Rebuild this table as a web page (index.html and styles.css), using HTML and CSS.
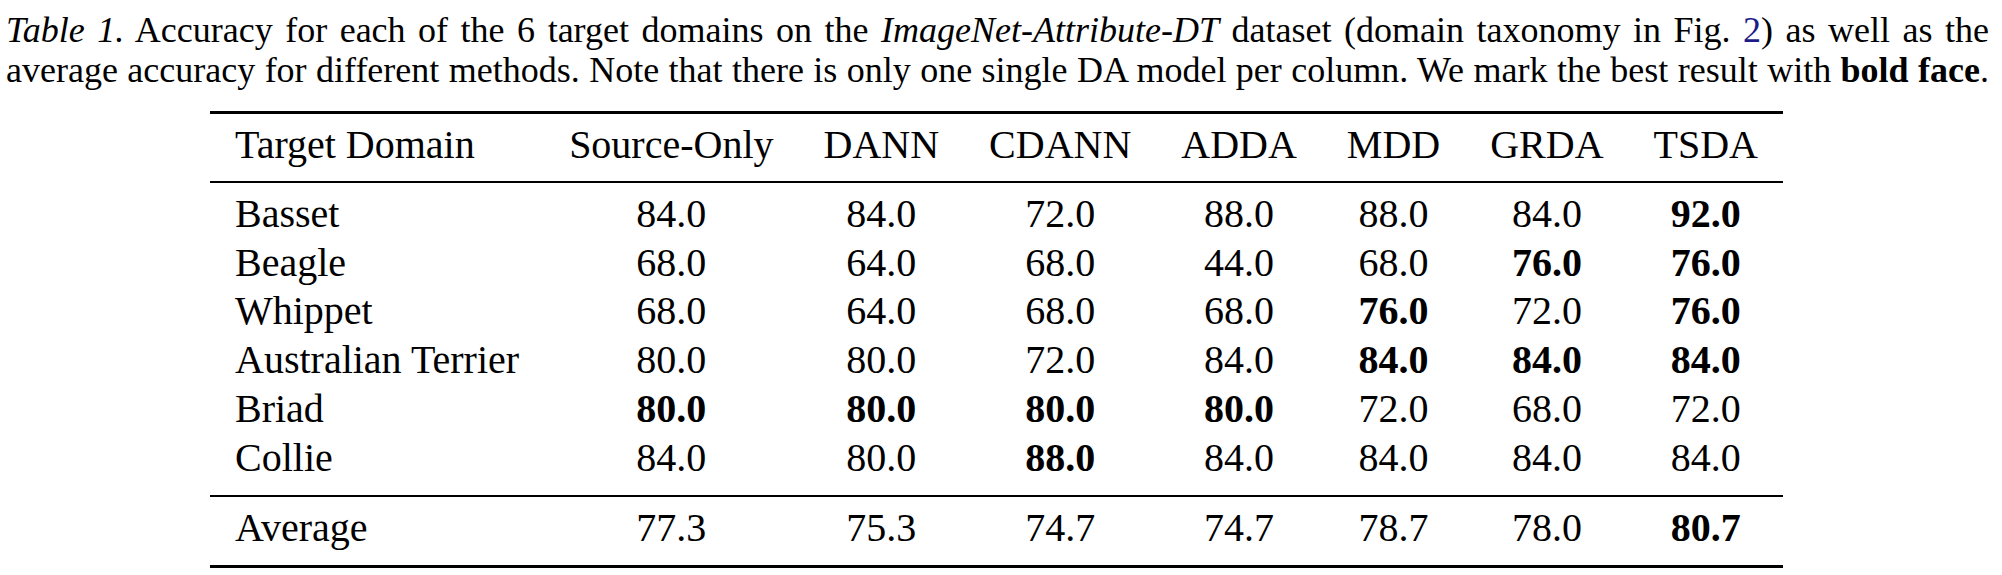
FILE: index.html
```html
<!DOCTYPE html>
<html>
<head>
<meta charset="utf-8">
<link rel="stylesheet" href="styles.css">
</head>
<body>
<div class="page">
  <p class="caption"><i>Table 1.</i> Accuracy for each of the 6 target domains on the <i>ImageNet-Attribute-DT</i> dataset (domain taxonomy in Fig. <span class="ref">2</span>) as well as the<br>average accuracy for different methods. Note that there is only one single DA model per column. We mark the best result with <b>bold face</b>.</p>
  <table class="results">
    <thead>
      <tr><th class="name">Target Domain</th><th>Source-Only</th><th>DANN</th><th>CDANN</th><th>ADDA</th><th>MDD</th><th>GRDA</th><th>TSDA</th></tr>
    </thead>
    <tbody class="main">
      <tr><td class="name">Basset</td><td>84.0</td><td>84.0</td><td>72.0</td><td>88.0</td><td>88.0</td><td>84.0</td><td class="best">92.0</td></tr>
      <tr><td class="name">Beagle</td><td>68.0</td><td>64.0</td><td>68.0</td><td>44.0</td><td>68.0</td><td class="best">76.0</td><td class="best">76.0</td></tr>
      <tr><td class="name">Whippet</td><td>68.0</td><td>64.0</td><td>68.0</td><td>68.0</td><td class="best">76.0</td><td>72.0</td><td class="best">76.0</td></tr>
      <tr><td class="name">Australian Terrier</td><td>80.0</td><td>80.0</td><td>72.0</td><td>84.0</td><td class="best">84.0</td><td class="best">84.0</td><td class="best">84.0</td></tr>
      <tr><td class="name">Briad</td><td class="best">80.0</td><td class="best">80.0</td><td class="best">80.0</td><td class="best">80.0</td><td>72.0</td><td>68.0</td><td>72.0</td></tr>
      <tr><td class="name">Collie</td><td>84.0</td><td>80.0</td><td class="best">88.0</td><td>84.0</td><td>84.0</td><td>84.0</td><td>84.0</td></tr>
    </tbody>
    <tbody class="avg">
      <tr><td class="name">Average</td><td>77.3</td><td>75.3</td><td>74.7</td><td>74.7</td><td>78.7</td><td>78.0</td><td class="best">80.7</td></tr>
    </tbody>
  </table>
</div>
</body>
</html>
```
FILE: styles.css
```css
html, body {
  margin: 0;
  padding: 0;
  background: #ffffff;
}
body {
  font-family: "Liberation Serif", "Times New Roman", serif;
  color: #000000;
}
.page {
  width: 2002px;
}
.caption {
  margin: 0;
  padding: 11px 13px 0 6px;
  font-size: 36px;
  line-height: 39.5px;
  text-align: justify;
  text-align-last: justify;
}
.caption .ref {
  color: #1c1c88;
}
.results {
  margin: 21px 0 0 210px;
  border-collapse: separate;
  border-spacing: 0;
  font-size: 40px;
  line-height: 48.8px;
}
.results th,
.results td {
  padding: 0 25px;
  text-align: center;
  font-weight: normal;
  white-space: nowrap;
}
.results .name {
  text-align: left;
}
.results td.best {
  font-weight: bold;
}
.results thead th {
  border-top: 3px solid #000;
  border-bottom: 2px solid #000;
  padding-top: 7px;
  padding-bottom: 11px;
}
.results tbody.main tr:first-child td {
  padding-top: 7px;
}
.results tbody.main tr:last-child td {
  padding-bottom: 12px;
  border-bottom: 2px solid #000;
}
.results tbody.avg td {
  padding-top: 7px;
  padding-bottom: 13px;
  border-bottom: 3px solid #000;
}
```
